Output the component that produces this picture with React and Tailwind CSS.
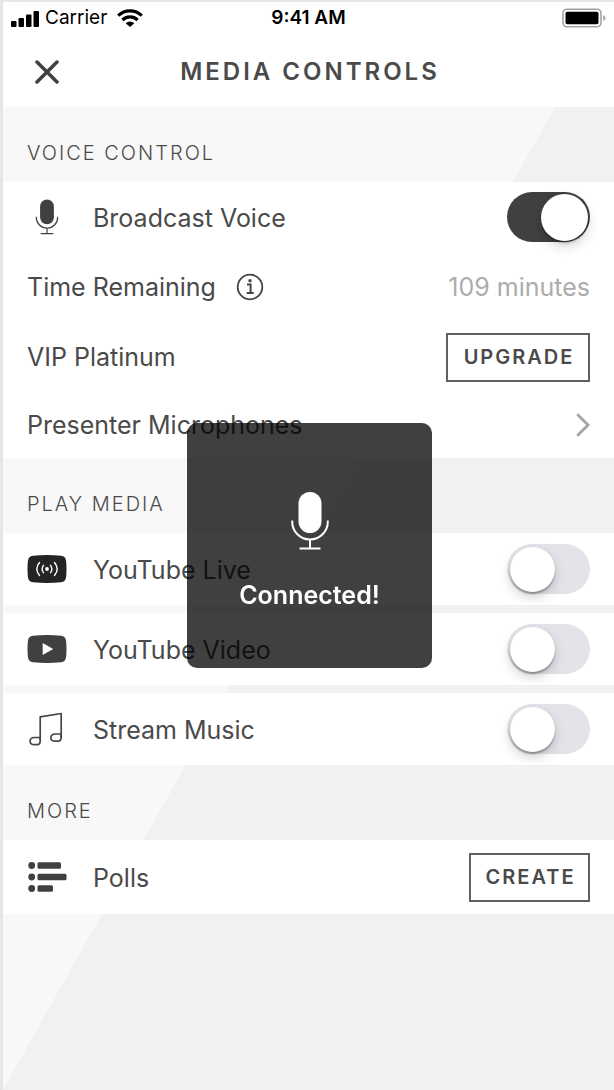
import { useState } from "react";

function Microphone({ className }) {
  return (
    <svg viewBox="0 0 38 60" className={className} aria-hidden="true">
      <rect x="7.5" y="1" width="23" height="41" rx="11.5" fill="currentColor" />
      <path
        d="M1.2 29.5v1.2a17.8 17.8 0 0 0 35.6 0v-1.2M19 48.5V57M8.5 57.6h21"
        fill="none"
        stroke="currentColor"
        strokeWidth="2"
      />
    </svg>
  );
}

function YouTubeLiveIcon() {
  return (
    <svg viewBox="0 0 40 28" className="h-7 w-10" aria-hidden="true">
      <path
        d="M6 .8Q20-.7 34 .8q4.600.4 5.100 5.200.8 8 0 16-.5 4.800-5.100 5.200-14 1.500-28 0-4.600-.4-5.100-5.200-.8-8 0-16Q1.400 1.200 6 .8Z"
        fill="#242424"
      />
      <circle cx="20" cy="14" r="1.900" fill="white" />
      <g fill="none" stroke="white" strokeWidth="1.400" strokeLinecap="round">
        <path d="M16.500 10.300q-2.800 3.700 0 7.400M23.500 10.300q2.800 3.700 0 7.400" />
        <path d="M12.500 7.500q-5.400 6.500 0 13M27.500 7.500q5.400 6.500 0 13" />
      </g>
    </svg>
  );
}

function YouTubeVideoIcon() {
  return (
    <svg viewBox="0 0 40 28" className="h-7 w-10" aria-hidden="true">
      <path
        d="M6 .8Q20-.7 34 .8q4.600.4 5.100 5.200.8 8 0 16-.5 4.800-5.100 5.200-14 1.500-28 0-4.600-.4-5.100-5.200-.8-8 0-16Q1.400 1.200 6 .8Z"
        fill="#404040"
      />
      <path d="M15.700 8v12l10.500-6Z" fill="white" />
    </svg>
  );
}

function MusicIcon() {
  return (
    <svg viewBox="0 0 40 36" className="h-9 w-10" fill="none" stroke="#454545" strokeWidth="1.700" strokeLinejoin="round" aria-hidden="true">
      <path d="M13.200 29V5.800L34.200 2.500v24" />
      <path d="M13.200 26.500H7.600q-4.500 0-4.500 3.700t4.500 3.500h2.200q3.400 0 3.400-4Z" />
      <path d="M34.200 23H28.400q-4.500 0-4.500 3.700t4.500 3.500h2.400q3.400 0 3.400-4Z" />
    </svg>
  );
}

function PollsIcon() {
  return (
    <svg viewBox="0 0 40 32" className="h-8 w-10" fill="#404040" aria-hidden="true">
      <circle cx="4.700" cy="4.500" r="3.400" />
      <circle cx="4.700" cy="16" r="3.400" />
      <circle cx="4.700" cy="27.500" r="3.400" />
      <rect x="10.500" y="1.200" width="23.500" height="6.600" rx="1.500" />
      <rect x="10.500" y="12.700" width="29" height="6.600" rx="1.500" />
      <rect x="10.500" y="24.200" width="15.500" height="6.600" rx="1.500" />
    </svg>
  );
}

function StatusBar() {
  return (
    <div className="grid h-8 grid-cols-[1fr_auto_1fr] items-center px-2 text-black">
      <div className="flex items-center gap-[6px]">
        <svg viewBox="0 0 28 17" className="h-[17px] w-7" aria-hidden="true">
          <rect x="0" y="11" width="5.500" height="6" rx="1" />
          <rect x="7.500" y="8" width="5.500" height="9" rx="1" />
          <rect x="15" y="4.500" width="5.500" height="12.500" rx="1" />
          <rect x="22.500" y="1" width="5.500" height="16" rx="1" />
        </svg>
        <span className="text-[19px] leading-6 font-normal">Carrier</span>
        <svg viewBox="0 0 26 18" className="ml-1 h-[18px] w-[26px]" aria-hidden="true">
          <g fill="none" stroke="black" strokeWidth="3.200">
            <path d="M1.200 6.600a17 17 0 0 1 23.600 0" />
            <path d="M5.400 11a11 11 0 0 1 15.200 0" />
          </g>
          <path d="M8.700 14.200a6.200 6.200 0 0 1 8.600 0L13 18Z" />
        </svg>
      </div>
      <span className="text-center text-[19px] leading-6 font-semibold">9:41 AM</span>
      <svg viewBox="0 0 44 20" className="h-5 w-11 justify-self-end" aria-hidden="true">
        <rect x="1" y="1.200" width="38" height="17.600" rx="4" fill="none" stroke="#a3a3a3" strokeWidth="1.600" />
        <rect x="3.500" y="3.700" width="33" height="12.600" rx="1.800" />
        <path d="M41.200 7.200q2.300.8 2.300 2.800t-2.300 2.800Z" fill="#a3a3a3" />
      </svg>
    </div>
  );
}

function Switch({ id, checked, onChange }) {
  return (
    <input
      id={id}
      type="checkbox"
      role="switch"
      checked={checked}
      onChange={(event) => onChange(event.target.checked)}
      className="flex h-[50px] w-[83px] shrink-0 cursor-pointer appearance-none items-center rounded-full bg-[#e4e3e9] px-[3px] before:size-[45px] before:rounded-full before:bg-white before:shadow-[0_2px_2px_rgba(0,0,0,0.3),0_5px_12px_rgba(0,0,0,0.18)] checked:justify-end checked:bg-[#404040] checked:px-[2px] checked:before:size-[47px]"
    />
  );
}

function SwitchRow({ id, label, icon, initial, className }) {
  const [on, setOn] = useState(initial);
  return (
    <div className={`flex items-center bg-white px-6 ${className}`}>
      <label htmlFor={id} className="flex grow items-center gap-[26px]">
        <span className="flex w-10 justify-center">{icon}</span>
        <span className="pt-[2px]">{label}</span>
      </label>
      <Switch id={id} checked={on} onChange={setOn} />
    </div>
  );
}

function SectionHeading({ children }) {
  return (
    <h2 className="flex h-[75px] items-center px-6 pt-4 text-[20px] leading-6 font-light tracking-[2px]">
      {children}
    </h2>
  );
}

function OutlineButton({ children, className }) {
  return (
    <button
      type="button"
      className={`h-[49px] border-2 border-[#606060] bg-white pl-[2px] text-center text-[20px] leading-6 font-semibold tracking-[2px] ${className}`}
    >
      {children}
    </button>
  );
}

export default function App() {
  return (
    <div className="flex min-h-screen flex-col border-t-2 border-l-[3px] border-[#e6e6e6] bg-linear-to-br from-[#f8f8f8] from-50% to-[#f1f1f1] to-50% font-['Inter','Liberation_Sans',sans-serif] text-[25px] leading-8 font-normal text-[#4a4a4a]">
      <header className="bg-white">
        <StatusBar />
        <div className="grid h-[73px] grid-cols-[40px_1fr_40px] items-center px-6 pt-[2px]">
          <button type="button" aria-label="Close" className="flex h-10 items-center justify-center">
            <svg viewBox="0 0 24 24" className="size-6" fill="none" stroke="#404040" strokeWidth="3.500" strokeLinecap="round" aria-hidden="true">
              <path d="M2 2l20 20M22 2L2 22" />
            </svg>
          </button>
          <h1 className="pl-[3px] text-center text-[24px] leading-8 font-semibold tracking-[3px]">MEDIA CONTROLS</h1>
        </div>
      </header>

      <main>
        <section>
          <SectionHeading>VOICE CONTROL</SectionHeading>
          <SwitchRow
            id="broadcast-voice"
            label="Broadcast Voice"
            icon={
              <span className="text-[#404040]">
                <Microphone className="h-9 w-6" />
              </span>
            }
            initial={true}
            className="h-[70px]"
          />
          <div className="flex h-[70px] items-center bg-white px-6">
            <span>Time Remaining</span>
            <button type="button" aria-label="About time remaining" className="ml-5">
              <svg viewBox="0 0 28 28" className="size-7" fill="none" stroke="#454545" aria-hidden="true">
                <circle cx="14" cy="14" r="12.300" strokeWidth="1.800" />
                <path d="M11 11.500h3.600v8.300M10.700 20h7" strokeWidth="2" />
                <circle cx="14" cy="7.800" r="1.700" fill="#454545" stroke="none" />
              </svg>
            </button>
            <span className="ml-auto text-[#acacac]">109 minutes</span>
          </div>
          <div className="flex h-[70px] items-center justify-between bg-white px-6">
            <span>VIP Platinum</span>
            <OutlineButton className="w-36">UPGRADE</OutlineButton>
          </div>
          <button type="button" className="flex h-[66px] w-full items-center justify-between bg-white px-6 text-left">
            <span>Presenter Microphones</span>
            <svg viewBox="0 0 14 24" className="h-6 w-[14px]" fill="none" stroke="#a3a3a3" strokeWidth="2.800" strokeLinecap="round" aria-hidden="true">
              <path d="M2 2l10 10L2 22" />
            </svg>
          </button>
        </section>

        <section>
          <SectionHeading>PLAY MEDIA</SectionHeading>
          <div className="flex flex-col gap-2">
            <SwitchRow id="youtube-live" label="YouTube Live" icon={<YouTubeLiveIcon />} initial={false} className="h-[72px]" />
            <SwitchRow id="youtube-video" label="YouTube Video" icon={<YouTubeVideoIcon />} initial={false} className="h-[72px]" />
            <SwitchRow id="stream-music" label="Stream Music" icon={<MusicIcon />} initial={false} className="h-[72px]" />
          </div>
        </section>

        <section>
          <SectionHeading>MORE</SectionHeading>
          <div className="flex h-[74px] items-center bg-white px-6">
            <PollsIcon />
            <span className="ml-[26px] pt-[2px]">Polls</span>
            <OutlineButton className="ml-auto w-[121px]">CREATE</OutlineButton>
          </div>
        </section>
      </main>

      <div className="pointer-events-none fixed inset-0 flex items-center justify-center pl-[5px]">
        <div role="status" className="flex size-[245px] flex-col items-center justify-center gap-7 rounded-[10px] bg-black/75 pt-3 text-white">
          <Microphone className="h-[60px] w-[38px]" />
          <p className="leading-8 font-semibold">Connected!</p>
        </div>
      </div>
    </div>
  );
}
